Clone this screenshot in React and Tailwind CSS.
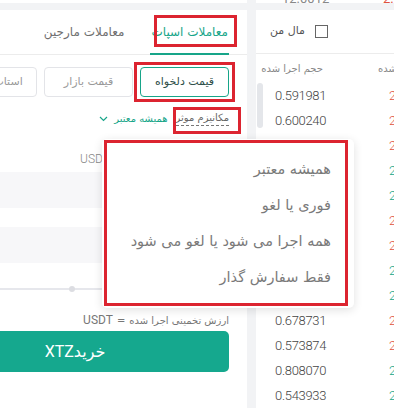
import React from "react";

const rows = [
  ["0.591981", "2.1034", "r"],
  ["0.600240", "2.1031", "r"],
  ["0.712538", "2.1029", "r"],
  ["0.534120", "2.1042", "g"],
  ["0.487365", "2.1045", "g"],
  ["0.629174", "2.1027", "r"],
  ["0.551903", "2.1025", "r"],
  ["0.702215", "2.1040", "g"],
  ["0.468832", "2.1043", "g"],
  ["0.678731", "2.1022", "r"],
  ["0.573874", "2.1020", "r"],
  ["0.808070", "2.1038", "g"],
  ["0.543933", "2.1041", "g"],
];

const menuItems = [
  "همیشه معتبر",
  "فوری یا لغو",
  "همه اجرا می شود یا لغو می شود",
  "فقط سفارش گذار",
];

const fa = "font-['DejaVu_Sans',sans-serif]";

const Mark = ({ cls }) => (
  <div className={`absolute border-[3px] border-[#dc2430] pointer-events-none ${cls}`} />
);

const App = () => {
  return (
    <div className="relative w-[394px] h-[408px] overflow-hidden bg-[#f2f3f5]">
      <div className="flex gap-[9px]">
        {/* left column */}
        <div className="flex flex-col gap-[7px] ml-[-95px] w-[342px] shrink-0">
          <div className="h-[3px] bg-white" />
          <div dir="rtl" className={`bg-white h-[398px] pr-[18px] pl-[16px] ${fa}`}>
            {/* tabs */}
            <div className="flex h-[45px] border-b border-[#ececec] -mr-[18px] -ml-[16px] pr-[18px] gap-[26px]">
              <div className="flex items-center border-b-2 border-[#17a589] text-[#17a589] text-[12px] mb-[-1px] px-[1px]">
                معاملات اسپات
              </div>
              <div className="flex items-center text-[#6f6f6f] text-[12px]">
                معاملات مارجین
              </div>
            </div>

            {/* order types */}
            <div className="flex gap-[7px] mt-[12px]">
              <div className="w-[89px] h-[30px] flex items-center justify-center rounded-[4px] border border-[#17a589] text-[#2f4f4a] text-[11px]">
                قیمت دلخواه
              </div>
              <div className="w-[89px] h-[30px] flex items-center justify-center rounded-[4px] border border-[#e3e4e8] text-[#999] text-[11px]">
                قیمت بازار
              </div>
              <div className="w-[89px] h-[30px] flex items-center justify-center rounded-[4px] border border-[#e3e4e8] text-[#999] text-[11px]">
                استاپ-لیمیت
              </div>
            </div>

            {/* mechanism */}
            <div className="flex items-center h-[17px] mt-[13px] gap-[8px] text-[10px]">
              <span className="text-[#666] border-b border-dashed border-[#777] leading-[14px]">مکانیزم موثر</span>
              <span className="flex items-center gap-[6px] text-[#17a589]">
                همیشه معتبر
                <svg width="9" height="6" viewBox="0 0 9 6" fill="none">
                  <path d="M1 1l3.5 3.5L8 1" stroke="#17a589" strokeWidth="1.2" />
                </svg>
              </span>
            </div>

            {/* balance */}
            <div className="flex h-[14px] mt-[25px] items-center text-[12px] text-[#888]">
              <span className="w-[119px]">موجودی: 0</span>
              <span className="font-['Roboto',sans-serif] font-light">USDT</span>
            </div>

            {/* inputs */}
            <div className="h-[36px] mt-[6px] bg-[#f7f7f9] rounded-[3px]" />
            <div className="h-[36px] mt-[19px] bg-[#f7f7f9] rounded-[3px]" />

            {/* slider */}
            <div className="relative h-[2px] mt-[25px] bg-[#e6e7ec]">
              <div className="absolute right-0 top-[-2px] w-[6px] h-[6px] rounded-full bg-[#dcdde2]" />
              <div className="absolute right-[25%] top-[-2px] w-[6px] h-[6px] rounded-full bg-[#dcdde2]" />
              <div className="absolute right-[50%] top-[-2px] w-[6px] h-[6px] rounded-full bg-[#dcdde2]" />
              <div className="absolute right-[75%] top-[-2px] w-[6px] h-[6px] rounded-full bg-[#dcdde2]" />
              <div className="absolute left-0 top-[-2px] w-[6px] h-[6px] rounded-full bg-[#dcdde2]" />
            </div>

            {/* estimate */}
            <div className="flex h-[14px] mt-[23px] items-center text-[10px] text-[#777] gap-[4px]">
              <span>ارزش تخمینی اجرا شده</span>
              <span>=</span>
              <span className="font-['Roboto',sans-serif] text-[12px]">USDT</span>
            </div>

            {/* buy button */}
            <div className="h-[41px] mt-[4px] rounded-[5px] bg-[#15a88e] flex items-center justify-center text-white text-[16px]">
              <span>خرید</span>
              <span className="font-['Roboto',sans-serif]">XTZ</span>
            </div>
          </div>
        </div>

        {/* right column */}
        <div className="flex flex-col gap-[7px] w-[260px] shrink-0">
          <div className="h-[3px] bg-white overflow-hidden relative font-['Roboto',sans-serif] text-[13px]">
            <span className="absolute left-[26px] bottom-[-3px] text-[#888] leading-[14px]">12.0012</span>
            <span className="absolute left-[127px] bottom-[-3px] text-[#e0523f] leading-[14px]">2.10</span>
          </div>
          <div className="relative bg-white h-[398px]">
            {/* scrollbar */}
            <div className="absolute left-[1px] top-[73px] w-[6px] h-[45px] rounded-full bg-[#e4e6ea]" />

            <div dir="rtl" className={`flex items-center h-[44px] border-b border-[#ececec] pr-[188px] gap-[10px] ${fa}`}>
              <div className="w-[13px] h-[13px] border border-[#666] bg-white" />
              <span className="text-[11px] text-[#555]">مال من</span>
            </div>

            <div className="pl-[19px]">
              <div className={`flex items-center h-[29px] text-[10px] text-[#888] ${fa}`}>
                <div dir="rtl" className="w-[48px] text-right whitespace-nowrap">حجم اجرا شده</div>
                <div dir="rtl" className="ml-[61px] w-[60px] text-left whitespace-nowrap">قیمت اجرا شده</div>
              </div>
              {rows.map(([v, p, c]) => (
                <div key={v} className="flex items-center h-[25px] font-['Roboto',sans-serif] text-[13px] font-light">
                  <div className="w-[48px] text-right text-[#444] tracking-[-0.3px]">{v}</div>
                  <div className={`ml-[66px] ${c === "r" ? "text-[#e0523f]" : "text-[#17a589]"}`}>{p}</div>
                </div>
              ))}
            </div>
          </div>
        </div>
      </div>

      {/* time-in-force dropdown */}
      <div dir="rtl" className={`absolute left-[102px] top-[139px] w-[252px] h-[169px] bg-white rounded-[5px] shadow-[0_2px_10px_rgba(0,0,0,0.12)] pt-[13px] pr-[23px] ${fa}`}>
        {menuItems.map((m) => (
          <div key={m} className="h-[36px] flex items-center text-[14.5px] text-[#7a7a7a]">
            {m}
          </div>
        ))}
      </div>

      {/* annotation boxes */}
      <Mark cls="left-[154px] top-[15px] w-[83px] h-[32px]" />
      <Mark cls="left-[134px] top-[62px] w-[101px] h-[40px]" />
      <Mark cls="left-[173px] top-[107px] w-[68px] h-[27px]" />
      <Mark cls="left-[104px] top-[140px] w-[244px] h-[166px]" />
    </div>
  );
};

export default App;
